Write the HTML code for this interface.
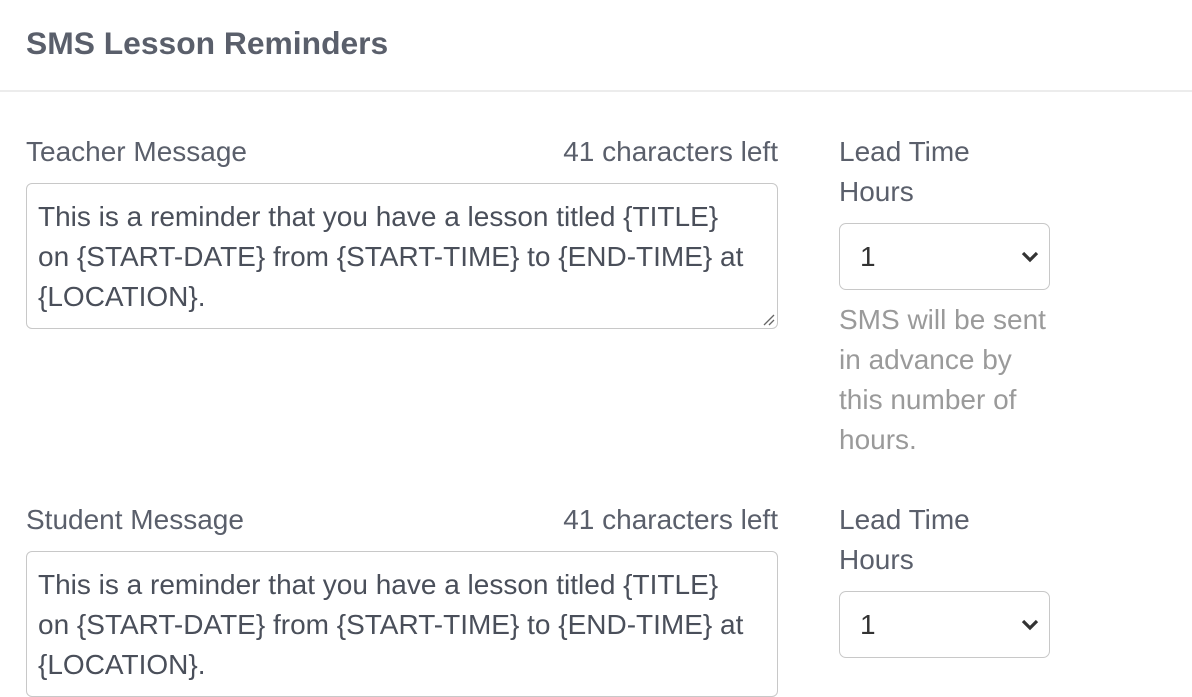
<!DOCTYPE html>
<html><head><style>
body{margin:0;width:1192px;height:664px;overflow:hidden;background:#fff;font-family:"Liberation Sans",Arial,sans-serif;color:#5a5f6b;position:relative}
.a{position:absolute;white-space:nowrap;font-size:28px;line-height:40px}
h1{position:absolute;left:26px;top:23px;margin:0;font-size:31.8px;font-weight:bold;line-height:40px;color:#5a5f6b}
.hr{position:absolute;left:0;top:90px;width:1192px;height:2px;background:#ececec}
.ta{position:absolute;left:26px;width:752px;height:146px;border:1px solid #c8c8c8;border-radius:6px;box-sizing:border-box;}
.ta div{position:absolute;left:11px;top:13px;font-size:28px;line-height:40px;color:#4a4f5a;white-space:nowrap}
.sel{position:absolute;left:839px;width:211px;height:67px;border:1px solid #c8c8c8;border-radius:7px;box-sizing:border-box}
.sel span{position:absolute;left:20px;top:13px;font-size:28px;line-height:40px;color:#333}
.sel svg{position:absolute;right:10px;top:26px}
.help{color:#9a9a9a}
</style></head><body>
<h1>SMS Lesson Reminders</h1>
<div class="hr"></div>

<div class="a" style="left:26px;top:132px">Teacher Message</div>
<div class="a" style="right:414px;top:132px">41 characters left</div>
<div class="ta" style="top:183px"><div>This is a reminder that you have a lesson titled {TITLE}<br>on {START-DATE} from {START-TIME} to {END-TIME} at<br>{LOCATION}.</div>
<svg style="position:absolute;right:2px;bottom:2px" width="12" height="12"><path d="M1 11L11 1M6 11L11 6" stroke="#666" stroke-width="1.3"/></svg></div>
<div class="a" style="left:839px;top:132px">Lead Time<br>Hours</div>
<div class="sel" style="top:223px"><span>1</span><svg width="18" height="13"><path d="M2 3L9 10L16 3" fill="none" stroke="#333" stroke-width="3.2"/></svg></div>
<div class="a help" style="left:839px;top:300px">SMS will be sent<br>in advance by<br>this number of<br>hours.</div>

<div class="a" style="left:26px;top:500px">Student Message</div>
<div class="a" style="right:414px;top:500px">41 characters left</div>
<div class="ta" style="top:551px"><div>This is a reminder that you have a lesson titled {TITLE}<br>on {START-DATE} from {START-TIME} to {END-TIME} at<br>{LOCATION}.</div></div>
<div class="a" style="left:839px;top:500px">Lead Time<br>Hours</div>
<div class="sel" style="top:591px"><span>1</span><svg width="18" height="13"><path d="M2 3L9 10L16 3" fill="none" stroke="#333" stroke-width="3.2"/></svg></div>
</body></html>
